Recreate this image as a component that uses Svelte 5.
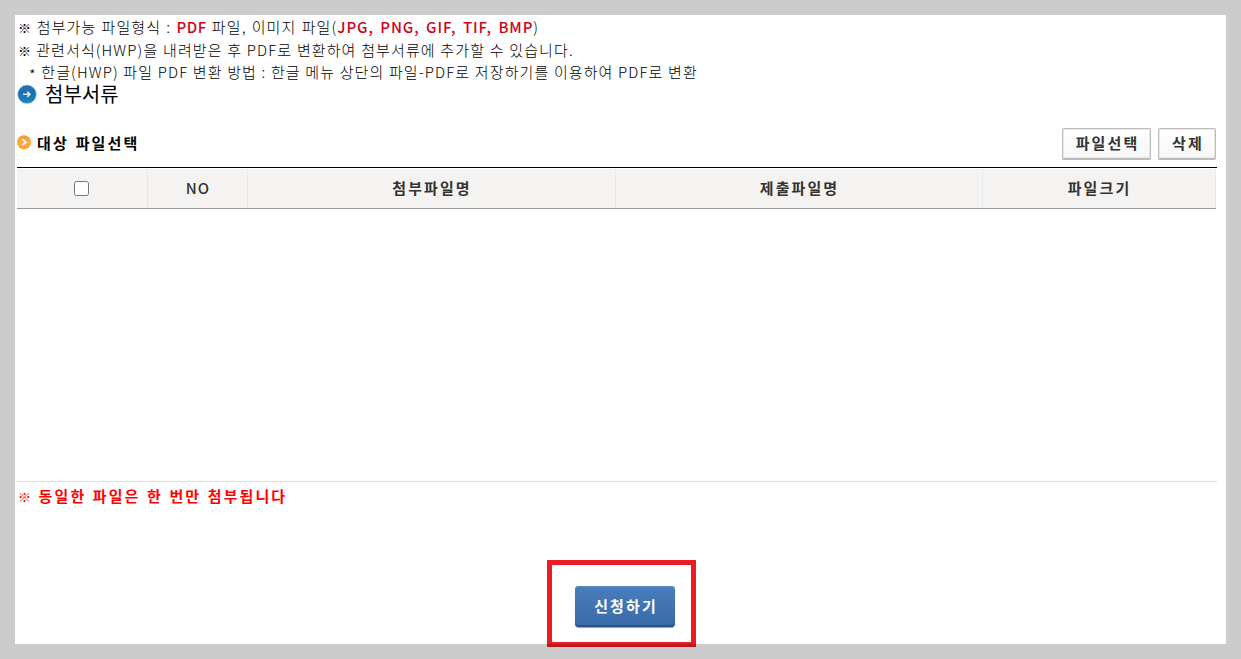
<script lang="ts">
  let allChecked = false;

  const columns = ['NO', '첨부파일명', '제출파일명', '파일크기'];
</script>

<div class="page">
  <main class="content">
    <div class="guide">
      <p class="types">
        <span class="mark">※</span> 첨부가능 파일형식 : <strong>PDF</strong> 파일, 이미지 파일(<strong class="formats">JPG, PNG, GIF, TIF, BMP</strong>)
      </p>
      <p><span class="mark">※</span> 관련서식(HWP)을 내려받은 후 PDF로 변환하여 첨부서류에 추가할 수 있습니다.</p>
      <p class="sub"><span class="star">*</span> 한글(HWP) 파일 PDF 변환 방법 : 한글 메뉴 상단의 파일-PDF로 저장하기를 이용하여 PDF로 변환</p>
    </div>

    <h2>
      <svg width="20" height="20" viewBox="0 0 20 20" aria-hidden="true">
        <defs>
          <linearGradient id="blue" x1="0" y1="0" x2="0" y2="1">
            <stop offset="0" stop-color="#2a6ea6" />
            <stop offset="0.5" stop-color="#1772b4" />
            <stop offset="1" stop-color="#2188bd" />
          </linearGradient>
        </defs>
        <circle cx="10" cy="10.3" r="9.3" fill="url(#blue)" stroke="#a9c7dc" stroke-width="0.6" />
        <path d="M6 10.3h7M10.3 7.7l2.6 2.6-2.6 2.6" fill="none" stroke="#d5ebf7" stroke-width="1.6" />
      </svg>
      <span>첨부서류</span>
    </h2>

    <div class="toolbar">
      <h3>
        <svg width="14" height="15" viewBox="0 0 14 15" aria-hidden="true">
          <defs>
            <linearGradient id="orange" x1="0" y1="0" x2="0" y2="1">
              <stop offset="0" stop-color="#ee983c" />
              <stop offset="0.5" stop-color="#ffae3d" />
              <stop offset="1" stop-color="#ff9a2b" />
            </linearGradient>
          </defs>
          <circle cx="7" cy="7.2" r="7" fill="url(#orange)" />
          <path d="M5.5 4.2l3.3 3-3.3 3" fill="none" stroke="#fff" stroke-width="1.8" />
        </svg>
        <span>대상 파일선택</span>
      </h3>
      <div class="buttons">
        <button type="button" class="btn select">파일선택</button>
        <button type="button" class="btn remove">삭제</button>
      </div>
    </div>

    <div class="grid">
      <div class="head">
        <div class="cell"><input type="checkbox" bind:checked={allChecked} aria-label="전체선택" /></div>
        {#each columns as column}
          <div class="cell"><span>{column}</span></div>
        {/each}
      </div>
      <div class="rows"></div>
    </div>

    <p class="notice"><span class="mark">※</span> 동일한 파일은 한 번만 첨부됩니다</p>

    <div class="actions">
      <div class="highlight">
        <button type="button" class="submit">신청하기</button>
      </div>
    </div>
  </main>
  <div class="frame"></div>
</div>

<style>
  :global(body) {
    margin: 0;
    background: #fff;
  }

  .page {
    position: relative;
    box-sizing: border-box;
    width: 1241px;
    height: 659px;
    padding: 15px 24px 0 17px;
    overflow: hidden;
    background: #fff;
    color: #000;
    font-family: 'Noto Sans CJK KR', sans-serif;
    font-size: 15px;
  }

  /* translucent edge, tints whatever reaches into it */
  .frame {
    position: absolute;
    inset: 0;
    border: 15px solid rgba(0, 0, 0, 0.2);
    pointer-events: none;
  }

  .content {
    display: flex;
    flex-direction: column;
    width: 1200px;
  }

  p,
  h2,
  h3 {
    margin: 0;
    white-space: nowrap;
  }

  .guide {
    height: 69px;
    padding-left: 1px;
    font-weight: 300;
    letter-spacing: 1.1px;
    word-spacing: 0.25px;
  }

  .guide p {
    height: 22.5px;
    line-height: 24px;
  }

  .guide .types {
    word-spacing: 0.8px;
  }

  .guide .sub {
    padding-left: 11px;
    word-spacing: 0.15px;
  }

  .star {
    line-height: 1;
    vertical-align: -3px;
  }

  .mark {
    margin-right: -0.6px;
    font-size: 13px;
  }

  strong {
    color: #d0021b;
    font-weight: 500;
    letter-spacing: 0.5px;
  }

  .guide .formats {
    letter-spacing: 0.9px;
    word-spacing: 2.2px;
  }

  h2 {
    display: flex;
    align-items: center;
    gap: 8px;
    height: 20px;
    margin-bottom: 2px;
    font-size: 20px;
    font-weight: 400;
    line-height: 20px;
  }

  .toolbar {
    display: flex;
    justify-content: space-between;
    width: 1199px;
    height: 61px;
  }

  h3 {
    display: flex;
    align-items: center;
    gap: 6px;
    height: 20px;
    margin-top: 26px;
    font-size: 15px;
    font-weight: 700;
    letter-spacing: 2.1px;
    word-spacing: 1.4px;
  }

  .buttons {
    display: flex;
    gap: 7px;
    margin-top: 22px;
  }

  button {
    box-sizing: border-box;
    padding: 0;
    font-family: inherit;
    font-size: 15px;
    font-weight: 700;
    letter-spacing: 2.1px;
  }

  .btn {
    height: 32px;
    padding: 0 0 2px 2px;
    border: 1px solid #bbb;
    border-bottom: 2px solid #bbb;
    border-radius: 2px;
    background: linear-gradient(#fff, #f7f7f7);
    box-shadow: inset 0 0 0 1px #e8e8e8;
    color: #333;
  }

  .select {
    width: 89px;
  }

  .remove {
    width: 58px;
  }

  .grid {
    box-sizing: border-box;
    height: 315px;
    border-top: 1px solid #000;
    border-bottom: 1px solid #ddd;
  }

  .head {
    display: grid;
    grid-template-columns: 131px 100px 368px 367px 233px;
    box-sizing: border-box;
    width: 1199px;
    height: 41px;
    border-top: 1px solid #fff;
    border-bottom: 1px solid #999;
    background: #f4f3f1;
  }

  .cell {
    display: flex;
    align-items: center;
    justify-content: center;
    padding: 0 0 1px 1px;
    border-right: 1px solid #e8e8e8;
    color: #333;
    font-weight: 700;
    letter-spacing: 2.1px;
    line-height: 20px;
  }

  .cell:first-child {
    padding: 0 2px 0 0;
  }

  .cell:nth-child(2) {
    font-weight: 500;
    letter-spacing: 1px;
  }

  .cell input {
    width: 15px;
    height: 15px;
    margin: 0;
  }

  .notice {
    height: 30px;
    padding-left: 1px;
    color: #f00;
    font-weight: 700;
    letter-spacing: 2.1px;
    line-height: 28px;
    word-spacing: 1px;
  }

  .notice .mark {
    margin-right: -1px;
  }

  .actions {
    padding: 48px 0 0 530px;
  }

  .highlight {
    display: flex;
    align-items: flex-start;
    box-sizing: border-box;
    width: 149px;
    height: 87px;
    padding: 21px 0 0 23px;
    border: 5px solid #ed1c24;
  }

  .submit {
    width: 100px;
    height: 41px;
    padding: 0 0 2px 2px;
    border: 0;
    border-radius: 4px;
    background: linear-gradient(#4a7ebb, #386aa8);
    box-shadow:
      inset 0 2px #5483b9,
      inset 0 -2px #2c5182,
      0 1px 1px #8ba3c0;
    color: #fff;
  }
</style>
